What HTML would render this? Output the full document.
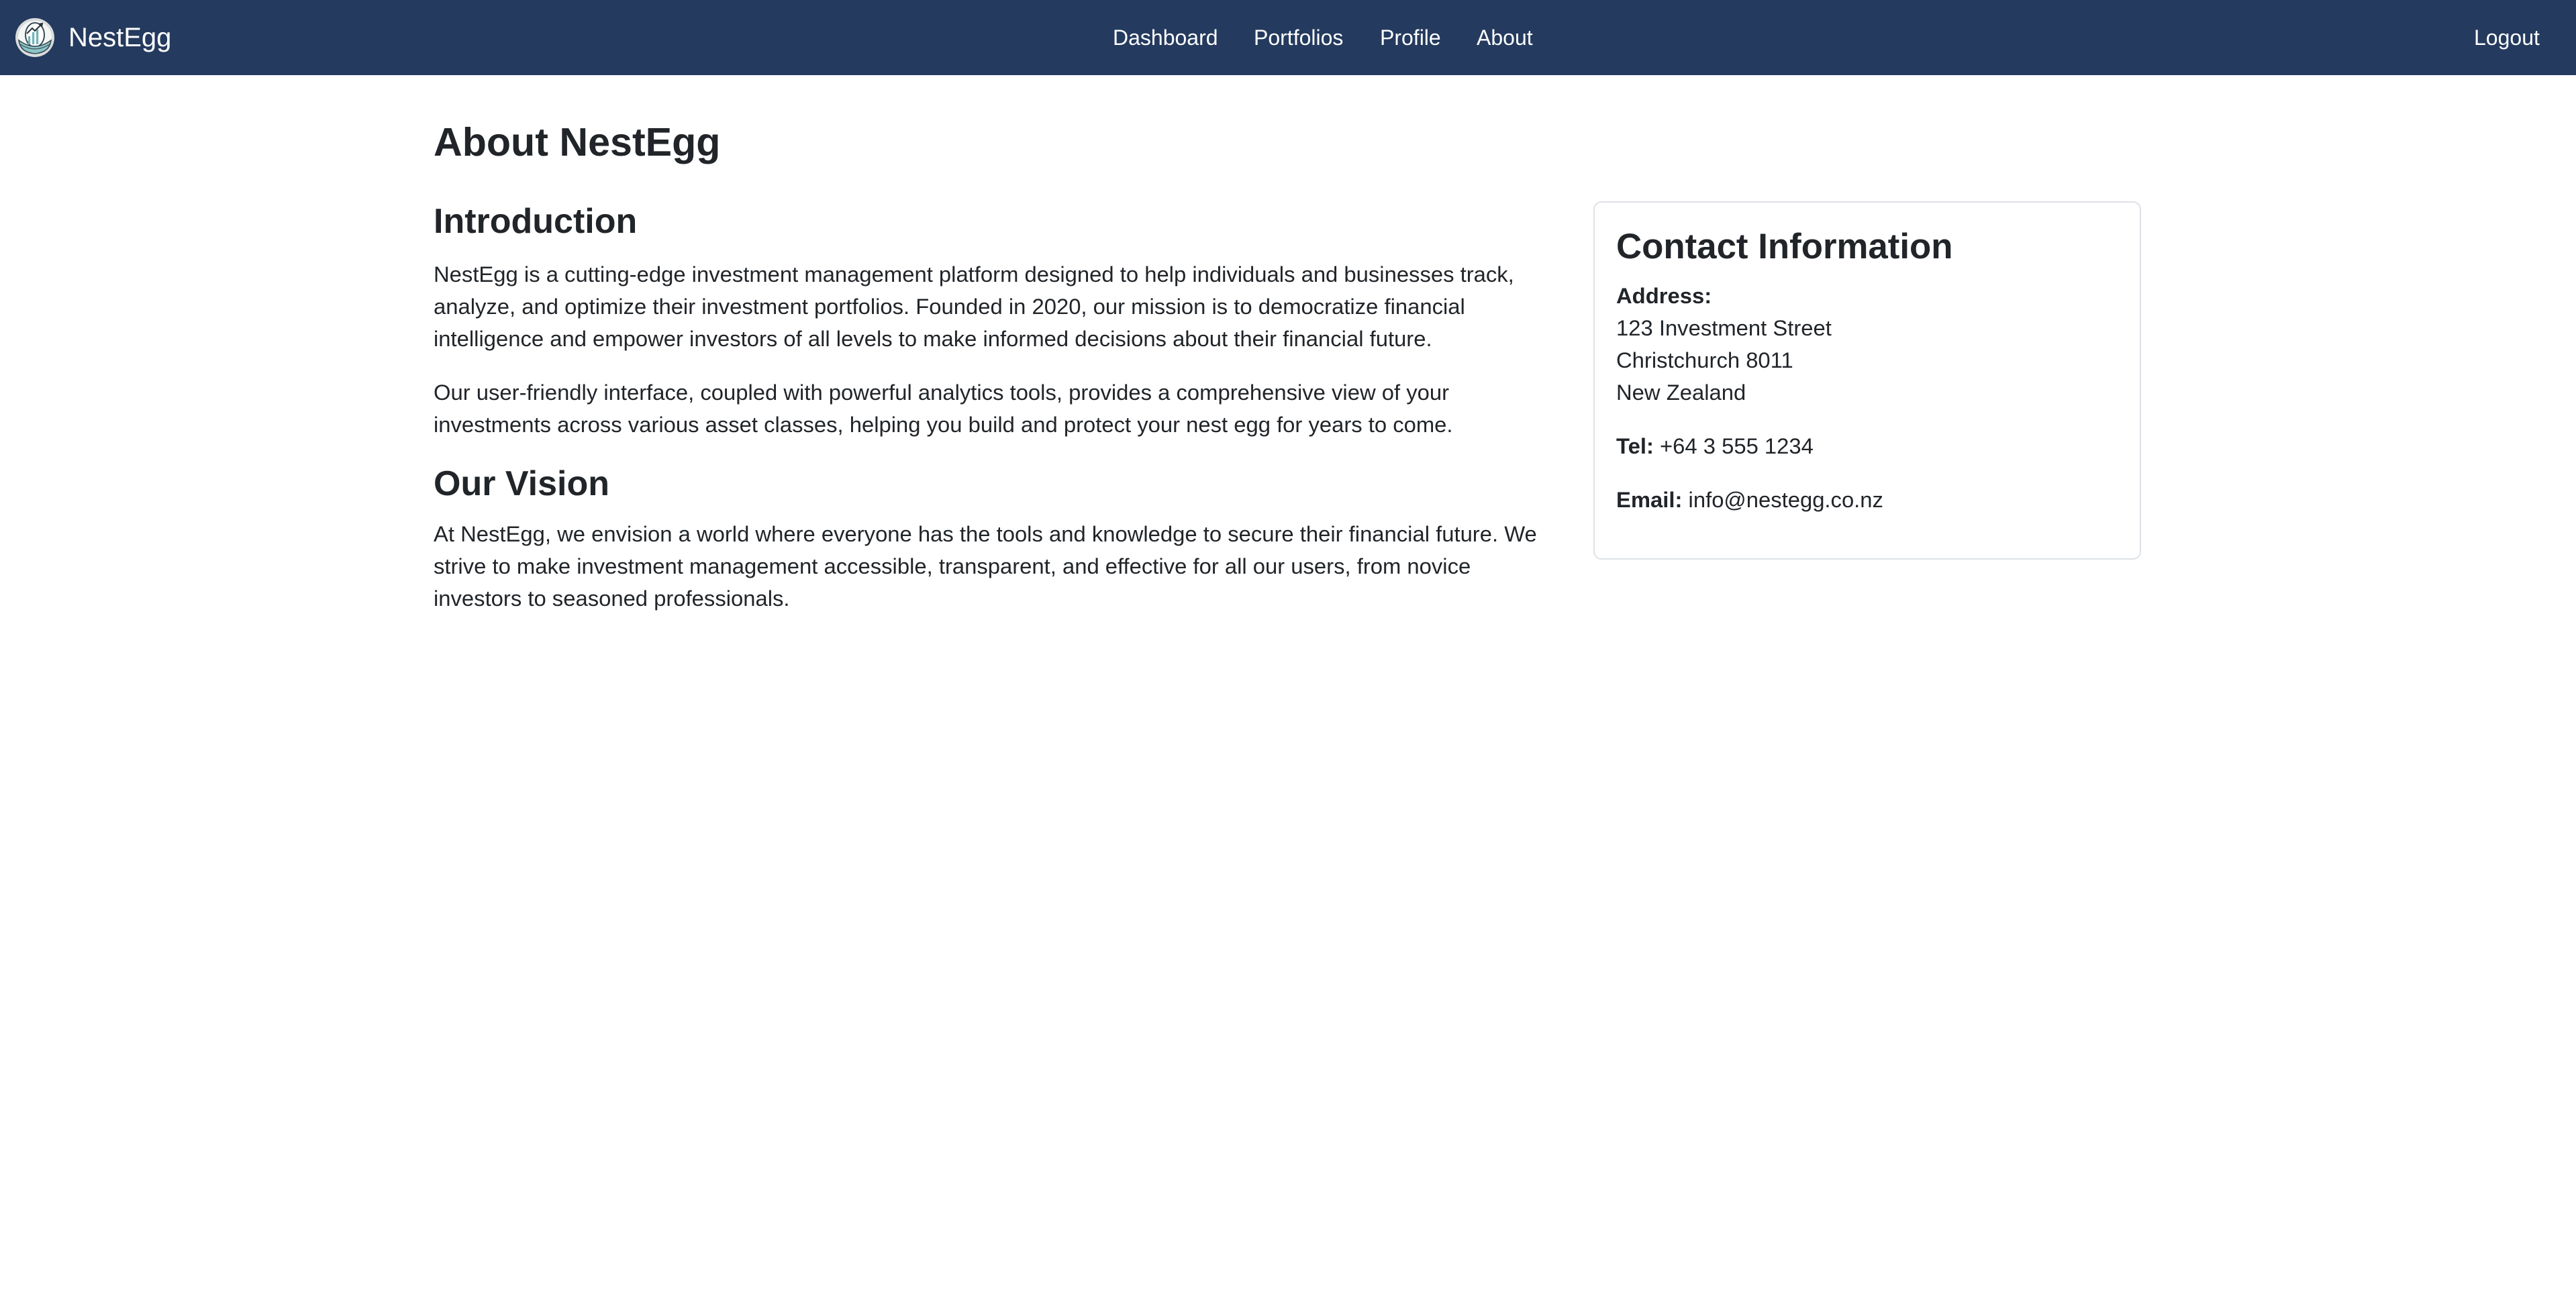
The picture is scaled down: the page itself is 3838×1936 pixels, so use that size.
<!DOCTYPE html>
<html><head><meta charset="utf-8">
<style>
html,body{margin:0;padding:0;background:#fff;}
body{zoom:2;width:1919px;height:968px;position:relative;overflow:hidden;font-family:"Liberation Sans",Arial,sans-serif;color:#212529;font-size:16px;line-height:1.5;}
.nav{position:absolute;left:0;top:0;width:1919px;height:56px;background:#243a5e;color:#fff;}
.nav a{position:absolute;color:#fff;text-decoration:none;font-size:16px;line-height:24px;top:16px;white-space:nowrap;}
.brand{position:absolute;left:51px;top:13px;font-size:20px;line-height:30px;color:#fff;}
.logo{position:absolute;left:11px;top:13px;}
.wrap{position:absolute;left:323px;top:0;width:1272px;}
h1{position:absolute;left:0;top:82px;margin:0;font-size:29.6px;line-height:48px;font-weight:700;}
.left{position:absolute;left:0;top:146px;width:900px;}
h2{margin:0 0 8px;font-size:26px;line-height:38.4px;font-weight:700;}
h2.v{margin:-3px 0 6px;}
p{margin:0 0 16px;white-space:nowrap;font-size:16.4px;line-height:24px;}
.card{position:absolute;left:864px;top:150px;width:374px;height:233px;border:1px solid #dee2e6;border-radius:6px;padding:16px;}
h3{margin:0 0 8px;font-size:26.4px;line-height:33.6px;font-weight:700;}
</style></head><body>
<div class="nav">
  <svg class="logo" width="30" height="30" viewBox="0 0 30 30">
    <circle cx="15" cy="15" r="14.5" fill="#d8dcdc"/>
    <circle cx="15" cy="15" r="12.5" fill="#f4f6f6"/>
    <ellipse cx="15" cy="13" rx="7" ry="9" fill="#fff" stroke="#3b4b55" stroke-width="1"/>
    <rect x="10" y="14" width="1.6" height="6" fill="#6fb3b8"/>
    <rect x="13" y="11" width="1.6" height="9" fill="#6fb3b8"/>
    <rect x="16" y="9" width="1.6" height="11" fill="#6fb3b8"/>
    <path d="M9 12 L13 8 L15 10 L20 5" stroke="#263238" stroke-width="1" fill="none"/>
    <path d="M18 5 L20.5 4.5 L20 7" stroke="#263238" stroke-width="1" fill="none"/>
    <path d="M3 17 Q15 26 27 17 Q26 26 15 27 Q4 26 3 17Z" fill="#8cc6c9" stroke="#3b4b55" stroke-width="0.8"/>
    <path d="M4 20 Q15 27 26 20" stroke="#3b4b55" stroke-width="0.6" fill="none"/>
  </svg>
  <div class="brand">NestEgg</div>
  <a style="left:829px">Dashboard</a>
  <a style="left:934px">Portfolios</a>
  <a style="left:1028px">Profile</a>
  <a style="left:1100px">About</a>
  <a style="left:1843px">Logout</a>
</div>
<div class="wrap">
  <h1>About NestEgg</h1>
  <div class="left">
    <h2>Introduction</h2>
    <p>NestEgg is a cutting-edge investment management platform designed to help individuals and businesses track,<br>analyze, and optimize their investment portfolios. Founded in 2020, our mission is to democratize financial<br>intelligence and empower investors of all levels to make informed decisions about their financial future.</p>
    <p>Our user-friendly interface, coupled with powerful analytics tools, provides a comprehensive view of your<br>investments across various asset classes, helping you build and protect your nest egg for years to come.</p>
    <h2 class="v">Our Vision</h2>
    <p>At NestEgg, we envision a world where everyone has the tools and knowledge to secure their financial future. We<br>strive to make investment management accessible, transparent, and effective for all our users, from novice<br>investors to seasoned professionals.</p>
  </div>
  <div class="card">
    <h3>Contact Information</h3>
    <p><b>Address:</b><br>123 Investment Street<br>Christchurch 8011<br>New Zealand</p>
    <p><b>Tel:</b> +64 3 555 1234</p>
    <p><b>Email:</b> info@nestegg.co.nz</p>
  </div>
</div>
</body></html>
